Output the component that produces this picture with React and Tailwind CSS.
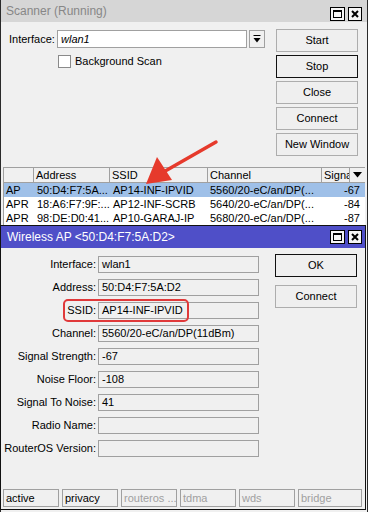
import React from "react";

function WinButtons() {
  return (
    <div className="flex gap-[3px]">
      <div className="w-[15px] h-[14px] border border-black bg-[#f6f6f6] flex items-center justify-center">
        <div className="w-[9px] h-[8px] border border-black border-t-2" />
      </div>
      <div className="w-[14px] h-[14px] border border-black bg-[#f6f6f6] flex items-center justify-center">
        <svg width="8" height="8" viewBox="0 0 8 8">
          <path d="M1 1L7 7M7 1L1 7" stroke="black" strokeWidth="2" />
        </svg>
      </div>
    </div>
  );
}

function Btn({ children, focused }) {
  return (
    <div
      className={
        "h-[23px] flex items-center justify-center bg-[#efefef] border " +
        (focused ? "border-[#111111]" : "border-[#adadad]")
      }
    >
      {children}
    </div>
  );
}

const hdr = [
  { w: "w-[30px]", t: "" },
  { w: "w-[76px]", t: "Address" },
  { w: "w-[98px]", t: "SSID" },
  { w: "w-[114px]", t: "Channel" },
  { w: "w-[28px]", t: "Signa" },
];

const rows = [
  ["AP", "50:D4:F7:5A...", "AP14-INF-IPVID", "5560/20-eC/an/DP(...", "-67", true],
  ["APR", "18:A6:F7:9F:...", "AP12-INF-SCRB", "5640/20-eC/an/DP(...", "-84", false],
  ["APR", "98:DE:D0:41...", "AP10-GARAJ-IP", "5680/20-eC/an/DP(...", "-87", false],
];

const fields = [
  ["Interface:", "wlan1"],
  ["Address:", "50:D4:F7:5A:D2"],
  ["SSID:", "AP14-INF-IPVID"],
  ["Channel:", "5560/20-eC/an/DP(11dBm)"],
  ["Signal Strength:", "-67"],
  ["Noise Floor:", "-108"],
  ["Signal To Noise:", "41"],
  ["Radio Name:", ""],
  ["RouterOS Version:", ""],
];

const status = [
  ["active", true],
  ["privacy", true],
  ["routeros ...", false],
  ["tdma", false],
  ["wds", false],
];

export default function App() {
  return (
    <div className="relative w-[368px] h-[512px] overflow-hidden bg-[#f0f0f0] text-[11px] leading-[13px] text-black font-['Liberation_Sans',Arial,sans-serif]">
      {/* Scanner window */}
      <div className="flex flex-col w-[368px] h-[512px] border-x border-[#2a2a2a]">
        <div className="h-[22px] shrink-0 bg-[#d6d6d6] flex items-end justify-between pl-[5px] pr-[5px] pb-[1px]">
          <span className="text-[12px] leading-[18px] text-[#878787] mb-[1px]">Scanner (Running)</span>
          <WinButtons />
        </div>
        <div className="flex pt-[7px]">
          <div className="flex-1 flex flex-col">
            <div className="flex items-center h-[18px] mt-[1px]">
              <span className="pl-[8px] w-[56px]">Interface:</span>
              <div className="w-[190px] h-[18px] bg-white border border-[#a0a0a0] pl-[3px] italic flex items-center">
                wlan1
              </div>
              <div className="ml-[2px] w-[16px] h-[18px] border border-[#a0a0a0] bg-[#f0f0f0] flex items-center justify-center">
                <svg width="8" height="8" viewBox="0 0 8 8">
                  <path d="M0.5 0.5H7.5" stroke="black" strokeWidth="1" />
                  <path d="M0.5 3L7.5 3L4 7.5Z" fill="black" />
                </svg>
              </div>
            </div>
            <div className="flex items-center mt-[7px] pl-[57px] gap-[4px]">
              <div className="w-[13px] h-[13px] bg-white border border-[#8a8a8a]" />
              <span>Background Scan</span>
            </div>
          </div>
          <div className="w-[82px] mr-[9px] flex flex-col gap-[3px]">
            <Btn>Start</Btn>
            <Btn focused>Stop</Btn>
            <Btn>Close</Btn>
            <Btn>Connect</Btn>
            <Btn>New Window</Btn>
          </div>
        </div>
        {/* table */}
        <div className="mt-[11px] ml-[2px] mr-[2px] border-l border-[#a0a0a0] flex flex-col">
          <div className="flex h-[16px] border-y border-[#a0a0a0] bg-[#f0f0f0]">
            {hdr.map((h, i) => (
              <div key={i} className={h.w + " border-r border-[#a0a0a0] pl-[2px] flex items-center overflow-hidden whitespace-nowrap"}>
                {h.t}
              </div>
            ))}
            <div className="flex-1 flex items-center justify-center">
              <svg width="9" height="6" viewBox="0 0 9 6">
                <path d="M0 0H9L4.5 5.5Z" fill="black" />
              </svg>
            </div>
          </div>
          {rows.map((r, i) => (
            <div key={i} className={"flex h-[14px] items-center whitespace-nowrap " + (r[5] ? "bg-[#9fc0e8]" : "bg-white")}>
              <div className="w-[30px] pl-[2px]">{r[0]}</div>
              <div className="w-[76px] pl-[3px] overflow-hidden">{r[1]}</div>
              <div className="w-[98px] pl-[3px] overflow-hidden">{r[2]}</div>
              <div className="w-[114px] pl-[2px] overflow-hidden">{r[3]}</div>
              <div className="flex-1 text-right pr-[5px]">{r[4]}</div>
            </div>
          ))}
        </div>
      </div>

      {/* Arrow */}
      <svg className="absolute left-0 top-0 pointer-events-none" width="368" height="512" viewBox="0 0 368 512">
        <path d="M216 142L160 174" stroke="#e63a2c" strokeWidth="3.5" strokeLinecap="round" />
        <path d="M146 184L157 157L172 180Z" fill="#e63a2c" />
      </svg>

      {/* Wireless AP window */}
      <div className="absolute left-0 top-[225px] w-[366px] h-[285px] border border-[#111111] bg-[#f0f0f0] flex flex-col">
        <div className="h-[22px] shrink-0 bg-[#4f4fc8] flex items-center justify-between pl-[6px] pr-[3px]">
          <span className="text-white text-[12px]">Wireless AP &lt;50:D4:F7:5A:D2&gt;</span>
          <WinButtons />
        </div>
        <div className="flex">
          <div className="flex flex-col gap-[6px] pt-[8px]">
            {fields.map((f, i) => (
              <div key={i} className="flex items-center h-[17px]">
                <div className="w-[97px] text-right pr-[2px] whitespace-nowrap">{f[0]}</div>
                <div className="w-[161px] h-[17px] border border-[#a0a0a0] pl-[3px] flex items-center whitespace-nowrap">
                  {f[1]}
                </div>
              </div>
            ))}
          </div>
          <div className="w-[82px] ml-[16px] pt-[6px] flex flex-col gap-[8px]">
            <Btn focused>OK</Btn>
            <Btn>Connect</Btn>
          </div>
        </div>
        <div className="mt-auto mb-[2px] ml-[2px] mr-[3px] flex gap-[3px]">
          {status.map((s, i) => (
            <div key={i} className={"w-[56px] h-[18px] border border-[#a0a0a0] pl-[2px] flex items-center whitespace-nowrap overflow-hidden " + (s[1] ? "text-black" : "text-[#a0a0a0]")}>
              {s[0]}
            </div>
          ))}
          <div className="flex-1 h-[18px] border border-[#a0a0a0] pl-[2px] flex items-center text-[#a0a0a0]">bridge</div>
        </div>
      </div>

      {/* SSID highlight */}
      <div className="absolute left-[63px] top-[299px] w-[126px] h-[23px] border-2 border-[#e0393a] rounded-[5px] pointer-events-none" />
    </div>
  );
}
